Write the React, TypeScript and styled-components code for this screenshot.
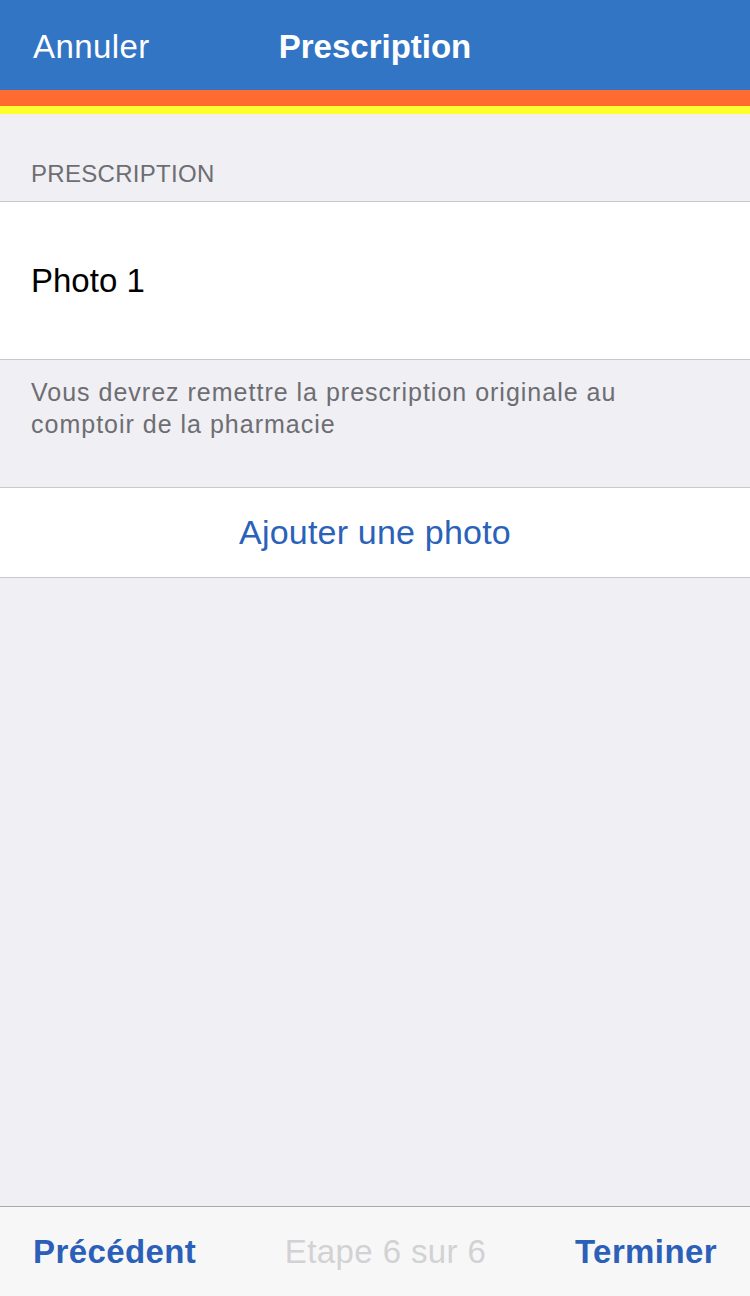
import React from "react";
import styled, { createGlobalStyle } from "styled-components";

const GlobalStyle = createGlobalStyle`
  html, body {
    margin: 0;
    padding: 0;
    background: #efeff4;
  }
  body {
    font-family: "Liberation Sans", Arial, sans-serif;
    -webkit-font-smoothing: antialiased;
  }
`;

const Screen = styled.div`
  width: 750px;
  height: 1296px;
  display: flex;
  flex-direction: column;
  background-color: #efeff4;
  overflow: hidden;
`;

const NavBar = styled.header`
  height: 90px;
  background-color: #3275c5;
  display: grid;
  grid-template-columns: 1fr auto 1fr;
  align-items: center;
  padding: 4px 33px 0;
  box-sizing: border-box;
`;

const NavButton = styled.button`
  justify-self: start;
  background: none;
  border: none;
  padding: 0;
  color: #ffffff;
  font-family: inherit;
  font-size: 33px;
  letter-spacing: 0.4px;
`;

const NavTitle = styled.h1`
  margin: 0;
  color: #ffffff;
  font-size: 33px;
  font-weight: 700;
`;

const Stripe = styled.div<{ $color: string; $height: number }>`
  height: ${(p) => p.$height}px;
  background-color: ${(p) => p.$color};
`;

const Content = styled.main`
  flex: 1;
  display: flex;
  flex-direction: column;
`;

const SectionHeader = styled.div`
  padding: 46px 31px 13px;
  color: #6d6d72;
  font-size: 24px;
  letter-spacing: 0.3px;
  line-height: 28px;
`;

const Group = styled.div`
  background-color: #ffffff;
  border-top: 1px solid #c8c7cc;
  border-bottom: 1px solid #c8c7cc;
`;

const Cell = styled.div`
  height: 157px;
  display: flex;
  align-items: center;
  padding: 0 31px;
  font-size: 33px;
  color: #000000;
`;

const SectionFooter = styled.p`
  margin: 0;
  padding: 16px 31px 47px;
  color: #6d6d72;
  font-size: 25px;
  letter-spacing: 1px;
  line-height: 32px;
`;

const ActionRow = styled.button`
  width: 100%;
  height: 89px;
  display: flex;
  align-items: center;
  justify-content: center;
  background: none;
  border: none;
  padding: 0;
  color: #2b62b9;
  font-family: inherit;
  font-size: 34px;
  letter-spacing: 0.2px;
`;

const Toolbar = styled.footer`
  height: 89px;
  background-color: #f7f7f8;
  border-top: 1px solid #a9a9ab;
  display: flex;
  align-items: center;
  justify-content: space-between;
  padding: 0 33px;
`;

const ToolbarButton = styled.button<{ $disabled?: boolean }>`
  background: none;
  border: none;
  padding: 0;
  font-family: inherit;
  font-size: 33px;
  letter-spacing: 0.4px;
  font-weight: ${(p) => (p.$disabled ? 400 : 700)};
  color: ${(p) => (p.$disabled ? "#d2d2d4" : "#2b5fb8")};
`;

export default function App() {
  return (
    <Screen>
      <GlobalStyle />
      <NavBar>
        <NavButton>Annuler</NavButton>
        <NavTitle>Prescription</NavTitle>
        <span />
      </NavBar>
      <Stripe $color="#ff6b30" $height={16} />
      <Stripe $color="#ffff2d" $height={8} />
      <Content>
        <SectionHeader>PRESCRIPTION</SectionHeader>
        <Group>
          <Cell>Photo 1</Cell>
        </Group>
        <SectionFooter>
          Vous devrez remettre la prescription originale au
          <br />
          comptoir de la pharmacie
        </SectionFooter>
        <Group>
          <ActionRow>Ajouter une photo</ActionRow>
        </Group>
      </Content>
      <Toolbar>
        <ToolbarButton>Précédent</ToolbarButton>
        <ToolbarButton $disabled>Etape 6 sur 6</ToolbarButton>
        <ToolbarButton>Terminer</ToolbarButton>
      </Toolbar>
    </Screen>
  );
}
